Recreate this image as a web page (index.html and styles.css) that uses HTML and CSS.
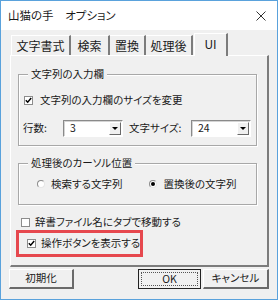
FILE: index.html
```html
<!DOCTYPE html>
<html lang="ja">
<head>
<meta charset="utf-8">
<link rel="stylesheet" href="styles.css">
</head>
<body>
<div class="window">
  <div class="titlebar">
    <span class="title">山猫の手　オプション</span>
    <svg class="close" width="10" height="10" viewBox="0 0 10 10"><path d="M0.5 0.5 L9.5 9.5 M9.5 0.5 L0.5 9.5" stroke="#333" stroke-width="1" fill="none"/></svg>
  </div>
  <div class="client">
    <div class="tabs">
      <div class="tab t1">文字書式</div>
      <div class="tab t2">検索</div>
      <div class="tab t3">置換</div>
      <div class="tab t4">処理後</div>
      <div class="tab active">UI</div>
    </div>
    <div class="panel">
      <fieldset class="group g1">
        <legend>文字列の入力欄</legend>
        <label class="check-row">
          <span class="checkbox"><svg width="7" height="7" viewBox="0 0 7 7"><path d="M0.8 3.2 L2.7 5.2 L6.2 1" stroke="#000" stroke-width="1.5" fill="none"/></svg></span>
          <span>文字列の入力欄のサイズを変更</span>
        </label>
        <div class="field-row">
          <span class="lbl">行数:</span>
          <span class="combo"><span class="val">3</span><span class="drop"><i></i></span></span>
          <span class="lbl2">文字サイズ:</span>
          <span class="combo"><span class="val">24</span><span class="drop"><i></i></span></span>
        </div>
      </fieldset>
      <fieldset class="group g2">
        <legend>処理後のカーソル位置</legend>
        <div class="radio-row">
          <label class="radio-item"><span class="radio"></span><span>検索する文字列</span></label>
          <label class="radio-item second"><span class="radio on"></span><span>置換後の文字列</span></label>
        </div>
      </fieldset>
      <label class="check-row solo">
        <span class="checkbox"></span>
        <span>辞書ファイル名にタブで移動する</span>
      </label>
      <div class="highlight">
        <label class="check-row">
          <span class="checkbox"><svg width="7" height="7" viewBox="0 0 7 7"><path d="M0.8 3.2 L2.7 5.2 L6.2 1" stroke="#000" stroke-width="1.5" fill="none"/></svg></span>
          <span>操作ボタンを表示する</span>
        </label>
      </div>
    </div>
    <div class="buttons">
      <button class="btn reset">初期化</button>
      <span class="spacer"></span>
      <button class="btn ok"><span class="focus">OK</span></button>
      <button class="btn cancel">キャンセル</button>
    </div>
  </div>
</div>
</body>
</html>
```

FILE: styles.css
```css
* { box-sizing: border-box; }
html, body { margin: 0; padding: 0; }
body {
  width: 278px;
  height: 300px;
  overflow: hidden;
  background: #fff;
  font-family: "Noto Sans CJK JP", "Noto Sans", sans-serif;
  font-size: 10.5px;
  line-height: 1;
  color: #1a1a1a;
  font-feature-settings: "palt";
  white-space: nowrap;
}
.window {
  width: 278px;
  height: 300px;
  border: 1px solid #5aa2dc;
  display: flex;
  flex-direction: column;
  background: #f0f0f0;
}
.titlebar {
  height: 29px;
  background: #fff;
  display: flex;
  align-items: center;
  justify-content: space-between;
  padding: 0 11px 0 7px;
  font-size: 11.5px;
  flex: none;
}
.client {
  flex: 1;
  display: flex;
  flex-direction: column;
  padding: 3px 8px 10px 9px;
}
.tabs {
  display: flex;
  align-items: flex-end;
  height: 22px;
  padding-left: 1px;
  flex: none;
}
.tab {
  height: 20px;
  display: flex;
  align-items: center;
  justify-content: center;
  font-size: 12px;
  border-right: 2px solid #7c7c7c;
  border-top: 1px solid #fff;
}
.t1 { width: 60px; border-left: 1px solid #fff; }
.t2 { width: 39px; }
.t3 { width: 36px; }
.t4 { width: 47px; }
.tab.active {
  width: 34px;
  height: 23px;
  margin-left: 1px;
  margin-bottom: -1px;
  border-left: 1px solid #fff;
  background: #f0f0f0;
  position: relative;
  z-index: 1;
  padding-bottom: 3px;
}
.panel {
  flex: 1;
  border-left: 1px solid #fff;
  border-top: 1px solid #fff;
  border-right: 2px solid #7c7c7c;
  border-bottom: 2px solid #7c7c7c;
  padding: 10px 10px 0 7px;
  display: flex;
  flex-direction: column;
}
.group {
  margin: 0;
  border: 1px solid #a8a8a8;
  box-shadow: 1px 1px 0 #fff, inset 1px 1px 0 #fff;
  padding: 0 4px;
  min-width: 0;
}
.group legend {
  padding: 0 3px;
  margin-left: 5px;
  background: #f0f0f0;
  line-height: 16px;
}
.g1 { height: 80px; padding-top: 11px; }
.g2 { height: 50px; margin-top: 9px; padding-top: 5px; }
.check-row {
  display: flex;
  align-items: center;
  gap: 7px;
  height: 14px;
}
.g1 .check-row { padding-left: 1px; }
.checkbox {
  width: 9px;
  height: 9px;
  border: 1px solid #8c8c8c;
  background: #fff;
  display: inline-flex;
  align-items: center;
  justify-content: center;
  flex: none;
}
.field-row {
  display: flex;
  align-items: center;
  margin-top: 13px;
  height: 17px;
}
.lbl { width: 40px; }
.lbl2 { margin-left: 6px; width: 62px; }
.combo {
  width: 60px;
  height: 17px;
  background: #fff;
  border-top: 1px solid #8a8a8a;
  border-left: 1px solid #8a8a8a;
  border-right: 1px solid #fff;
  border-bottom: 1px solid #fff;
  box-shadow: inset 1px 1px 0 #d4d4d4;
  display: flex;
  align-items: center;
  padding: 1px;
}
.combo .val { flex: 1; padding-left: 5px; }
.drop {
  width: 12px;
  height: 13px;
  background: #f0f0f0;
  border-top: 1px solid #fff;
  border-left: 1px solid #fff;
  border-right: 1px solid #6a6a6a;
  border-bottom: 1px solid #6a6a6a;
  display: flex;
  align-items: center;
  justify-content: center;
}
.drop i {
  width: 0;
  height: 0;
  border-left: 3px solid transparent;
  border-right: 3px solid transparent;
  border-top: 3px solid #000;
}
.radio-row { display: flex; align-items: center; height: 16px; padding-left: 14px; }
.radio-item { display: flex; align-items: center; gap: 6px; }
.radio-item.second { margin-left: 27px; }
.radio {
  width: 8px;
  height: 8px;
  border-radius: 50%;
  border: 1px solid #8c8c8c;
  border-right-color: #e6e6e6;
  border-bottom-color: #e6e6e6;
  background: #fff;
  display: inline-flex;
  align-items: center;
  justify-content: center;
}
.radio.on::after {
  content: "";
  width: 4px;
  height: 4px;
  border-radius: 50%;
  background: #000;
}
.check-row.solo { margin-top: 10px; padding-left: 3px; gap: 5px; }
.highlight {
  margin-top: 1px;
  margin-left: -2px;
  width: 127px;
  height: 27px;
  border: 3px solid #e6484e;
  display: flex;
  align-items: center;
  padding-left: 8px;
}
.highlight .check-row { gap: 5px; }
.buttons {
  display: flex;
  margin-top: 2px;
  height: 20px;
  flex: none;
}
.spacer { flex: 1; }
.btn {
  font: inherit;
  color: #1a1a1a;
  background: #f0f0f0;
  border-top: 1px solid #fff;
  border-left: 1px solid #fff;
  border-right: 2px solid #6a6a6a;
  border-bottom: 2px solid #6a6a6a;
  padding: 0;
  height: 20px;
}
.reset { width: 65px; margin-left: -1px; }
.ok { width: 63px; border: 1px solid #222; padding: 2px; }
.ok .focus {
  display: flex;
  width: 100%;
  height: 100%;
  align-items: center;
  justify-content: center;
  border: 1px dotted #555;
}
.cancel { width: 66px; margin-left: 2px; }
```
